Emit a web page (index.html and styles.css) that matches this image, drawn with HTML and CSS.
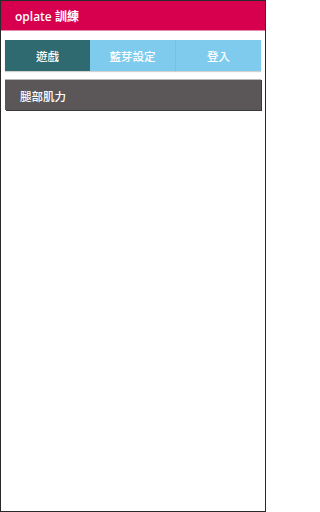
FILE: index.html
```html
<!DOCTYPE html>
<html>
<head>
<meta charset="utf-8">
<link rel="stylesheet" href="styles.css">
</head>
<body>
<div class="frame">
  <header class="topbar">oplate 訓練</header>
  <main class="content">
    <nav class="tabs">
      <div class="tab tab-active">遊戲</div>
      <div class="tab">藍芽設定</div>
      <div class="tab tab-last">登入</div>
    </nav>
    <div class="item">腿部肌力</div>
  </main>
</div>
</body>
</html>
```
FILE: styles.css
```css
html, body {
  margin: 0;
  padding: 0;
  background: #ffffff;
}
body {
  font-family: "Open Sans", "Noto Sans CJK TC", sans-serif;
}
.frame {
  box-sizing: border-box;
  width: 266px;
  height: 512px;
  border: 1px solid #2a2a2a;
  background: #fff;
  display: flex;
  flex-direction: column;
}
.topbar {
  height: 29px;
  background: #d6004f;
  border-bottom: 1px solid #e58aa8;
  color: #fff;
  font-weight: 600;
  font-size: 12px;
  display: flex;
  align-items: center;
  padding-left: 14px;
}
.content {
  padding: 9px 4px 0 4px;
  display: flex;
  flex-direction: column;
}
.tabs {
  display: flex;
  height: 31px;
  box-shadow: 0 1px 1px rgba(0,0,0,0.18);
}
.tab {
  flex: 1;
  background: #7ecbee;
  color: #fff;
  font-size: 11.5px;
  font-weight: 500;
  font-family: "Noto Sans CJK TC", sans-serif;
  display: flex;
  align-items: center;
  justify-content: center;
}
.tab + .tab {
  border-left: 1px solid #76c1e3;
}
.tab-active {
  background: #2f6a70;
}
.tab-active + .tab {
  border-left: none;
}
.item {
  margin-top: 8px;
  background: #5b5758;
  border-top: 1px solid #b8b8b8;
  box-shadow: 1px 1px 0 #3a3839;
  color: #fff;
  font-family: "Noto Sans CJK TC", sans-serif;
  font-size: 11.5px;
  font-weight: 500;
  display: flex;
  align-items: center;
  padding-left: 15px;
  padding-top: 1px;
  box-sizing: border-box;
  height: 31px;
}
```
